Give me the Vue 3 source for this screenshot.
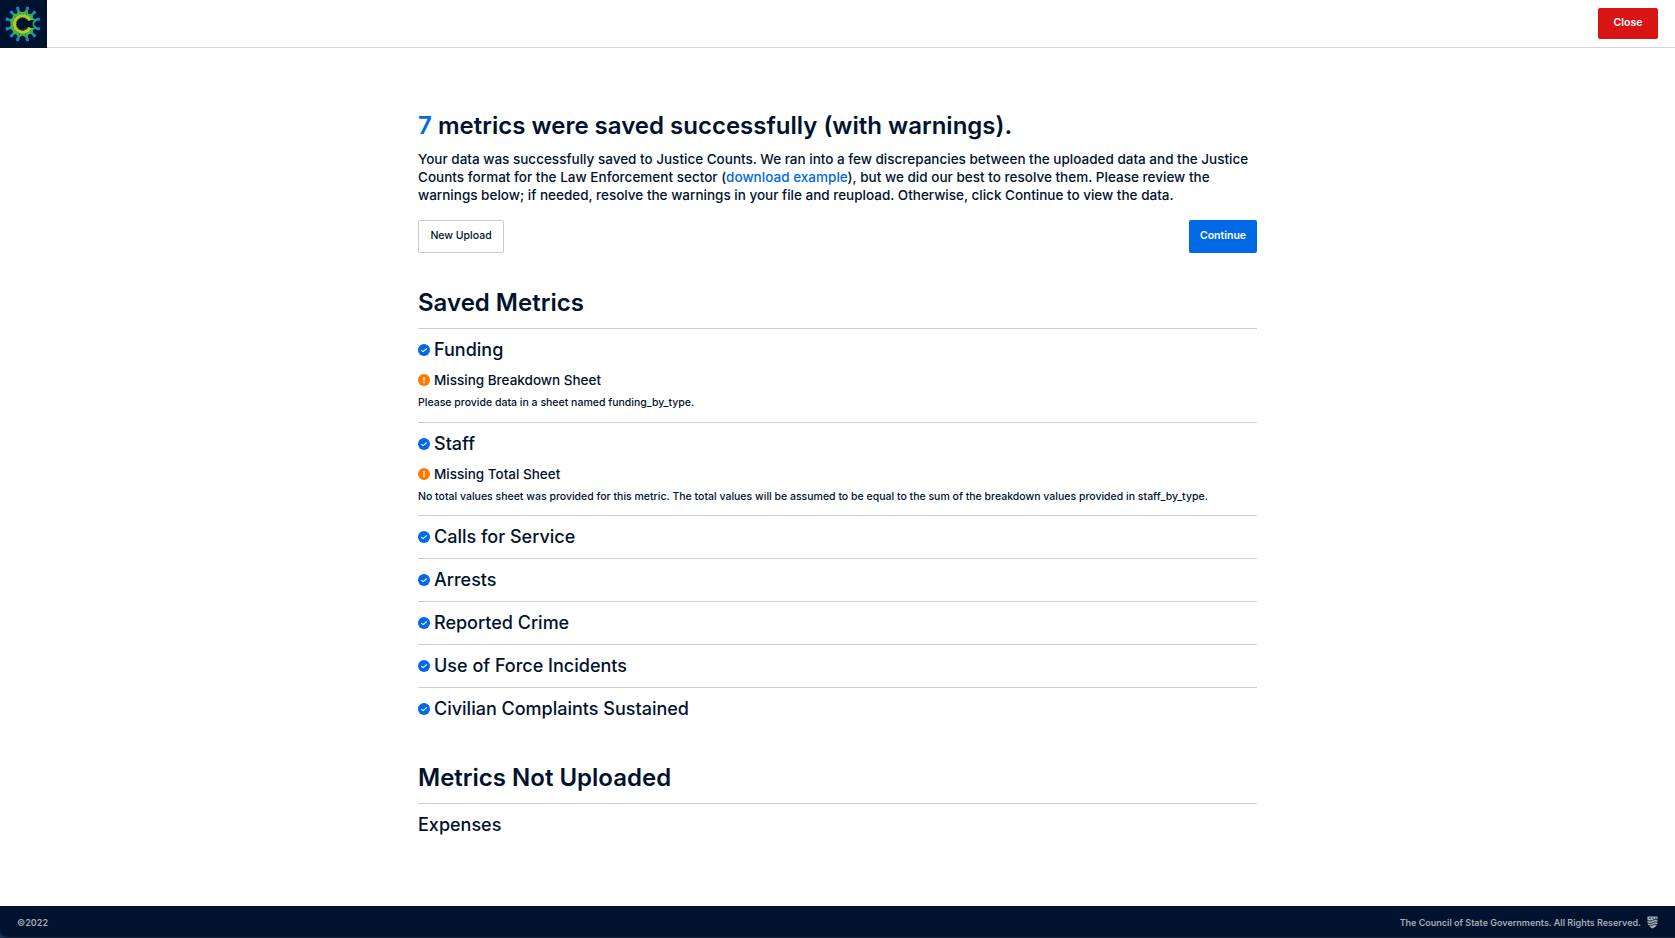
<script setup>
const saved = [
  { name: 'Funding', warning: 'Missing Breakdown Sheet', detail: 'Please provide data in a sheet named funding_by_type.' },
  {
    name: 'Staff',
    warning: 'Missing Total Sheet',
    detail: 'No total values sheet was provided for this metric. The total values will be assumed to be equal to the sum of the breakdown values provided in staff_by_type.',
  },
  { name: 'Calls for Service' },
  { name: 'Arrests' },
  { name: 'Reported Crime' },
  { name: 'Use of Force Incidents' },
  { name: 'Civilian Complaints Sustained' },
]
const spokes = [17, 45, 74, 108, 134, 163, 197, 226, 252, 286, 315, 343]
</script>

<template>
  <div class="page">
    <header class="header">
      <svg class="logo" width="47" height="48" viewBox="0 0 47 48">
        <rect width="47" height="48" fill="#00122e" />
        <g v-for="a in spokes" :key="a" :transform="`rotate(${a} 22.8 24)`">
          <path d="M35 24h3" stroke="#12a09a" stroke-width="2.2" />
          <path d="M32.600 21.300l3.600 2.700-3.600 2.700" stroke="#1fae70" stroke-width="1.9" fill="none" />
          <rect x="37.600" y="22.500" width="3" height="3" fill="#0a8be8" />
        </g>
        <path d="M32.2 28.4A10.7 10.7 0 1 1 32.2 19.6" fill="none" stroke="#4cb84c" stroke-width="2.6" stroke-dasharray="2.6 .5" />
        <path d="M30 27.600A8.2 8.2 0 1 1 30 20.400" fill="none" stroke="#b9c92b" stroke-width="3" />
        <path d="M28.200 27A6.3 6.3 0 1 1 28.200 21" fill="none" stroke="#8a971d" stroke-width="1" stroke-dasharray="1.2 .8" />
      </svg>
      <button class="btn close">Close</button>
    </header>

    <main class="content">
      <h1 class="title"><span class="blue">7</span> metrics were saved successfully (with warnings).</h1>
      <p class="intro">
        Your data was successfully saved to Justice Counts. We ran into a few discrepancies between the uploaded data and the Justice<br />
        <span class="loose">Counts format for the Law Enforcement sector (<a class="blue">download example</a>), but we did our best to resolve them. Please review the</span><br />
        warnings below; if needed, resolve the warnings in your file and reupload. Otherwise, click Continue to view the data.
      </p>
      <div class="actions">
        <button class="btn upload">New Upload</button>
        <button class="btn continue">Continue</button>
      </div>

      <h2 class="section">Saved Metrics</h2>
      <section v-for="m in saved" :key="m.name" class="metric" :class="{ warned: m.warning }">
        <h3 class="name">
          <svg class="icon" width="12" height="12" viewBox="0 0 12 12">
            <circle cx="6" cy="6" r="6" fill="#0069e5" />
            <path d="M3.2 6.1L5.1 7.6L8.8 4.5" fill="none" stroke="#fff" stroke-width="1.1" />
          </svg>
          <span>{{ m.name }}</span>
        </h3>
        <template v-if="m.warning">
          <div class="warning">
            <svg class="icon" width="12" height="12" viewBox="0 0 12 12">
              <circle cx="6" cy="6" r="6" fill="#ff7b00" />
              <path d="M6 3v3.6M6 7.6v1.4" stroke="#fff" stroke-width="1.4" />
            </svg>
            <span>{{ m.warning }}</span>
          </div>
          <p class="detail">{{ m.detail }}</p>
        </template>
      </section>

      <h2 class="section missing">Metrics Not Uploaded</h2>
      <section class="metric"><h3 class="name">Expenses</h3></section>
    </main>

    <footer class="footer">
      <span>©2022</span>
      <div class="rights">
        <span>The Council of State Governments. All Rights Reserved.</span>
        <svg width="11" height="13" viewBox="0 0 12 13" preserveAspectRatio="none">
          <path d="M.5 .5h11v6.3q-.3 3.7-5.5 5.7Q.8 10.500 .5 6.800z" fill="#aab0ba" />
          <path d="M0 4.300q3 1.600 6 0t6-.5M0 6.800q3 1.600 6 0t6-.5M1 9.300q3 1.200 5-.2t5-.4M2 2.100h2.500M6 2.100h1.500M9 2.100h1.500" fill="none" stroke="#00122e" stroke-width=".9" />
        </svg>
      </div>
    </footer>
  </div>
</template>

<style>
body { margin: 0; background: #fff; overflow: hidden; }
</style>

<style scoped>
.page {
  height: 938px;
  display: flex;
  flex-direction: column;
  font-family: Inter, "Liberation Sans", sans-serif;
  font-weight: 500;
  color: #00122e;
}
.header {
  box-sizing: border-box;
  height: 48px;
  flex: none;
  display: flex;
  justify-content: space-between;
  align-items: flex-start;
  border-bottom: 1px solid #d6d7da;
}
.logo { display: block; }
.btn {
  box-sizing: border-box;
  font: inherit;
  font-size: 10.500px;
  line-height: 14px;
  border: 0;
  border-radius: 2px;
  padding: 0;
  color: #fff;
  white-space: nowrap;
}
.close { width: 60px; height: 31px; margin: 8px 17px 0 0; padding-bottom: 1px; background: #d91414; font-weight: 600; }
.content { width: 839px; margin: 0 auto; flex: 1; }
h1, h2, h3, p { margin: 0; }
.title { margin-top: 62px; font-size: 24px; line-height: 31px; font-weight: 600; white-space: nowrap; }
.blue { color: #0069e5; }
.intro { margin-top: 9px; font-size: 13.500px; line-height: 18px; white-space: nowrap; }
.loose { letter-spacing: .018px; }
.actions { margin-top: 16px; display: flex; justify-content: space-between; }
.upload { width: 86px; height: 33px; padding-bottom: 2px; border: 1px solid #c8cad0; background: #fff; color: #00122e; }
.continue { width: 68px; height: 33px; padding-bottom: 2px; background: #0069e5; font-weight: 600; }
.section { margin-top: 33px; height: 42px; font-size: 24px; line-height: 33px; font-weight: 600; }
.missing { margin-top: 31px; }
.metric { box-sizing: border-box; height: 43px; border-top: 1px solid #cbcdd1; }
.warned { height: 94px; }
.warned + .warned { height: 93px; }
.name { display: flex; align-items: center; gap: 4px; height: 41px; font-size: 18px; font-weight: 500; }
.name .icon { margin-top: 1px; }
.icon { flex: none; }
.warning { display: flex; align-items: center; gap: 4px; margin-top: 1px; height: 18px; font-size: 13.500px; }
.detail { margin-top: 7px; font-size: 10.500px; line-height: 14px; letter-spacing: .006px; white-space: nowrap; }
.footer {
  box-sizing: border-box;
  height: 32px;
  flex: none;
  display: flex;
  justify-content: space-between;
  align-items: center;
  padding: 2px 17px 0;
  background: radial-gradient(circle at 8px 0, #00122e 7px, #1d4a80 12px) 0 100% / 8px 8px no-repeat, #00122e;
  border-bottom: 1px solid #1b2b44;
  color: #a5abb5;
  font-size: 9px;
  line-height: 10px;
  font-weight: 600;
}
.rights { display: flex; align-items: center; gap: 6px; }
</style>
